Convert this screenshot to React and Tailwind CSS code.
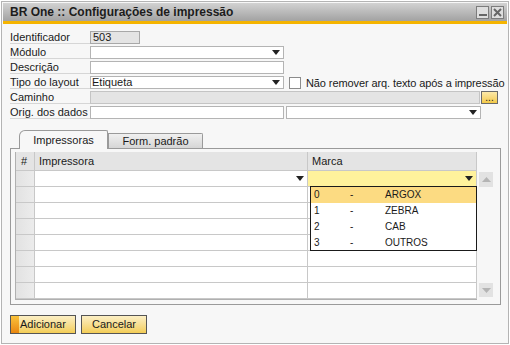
import React from 'react';

const Arrow = () => (
  <svg width="8" height="5" viewBox="0 0 8 5" className="shrink-0">
    <polygon points="0,0 8,0 4,5" fill="#222" />
  </svg>
);

function Label({ children }) {
  return (
    <div className="w-[80px] h-[13px] border-b border-[#d6d6d6] leading-[12px] shrink-0">
      {children}
    </div>
  );
}

function Select({ width, value, className = '' }) {
  return (
    <div className={`${width} h-[13px] bg-white border border-[#b4b4b4] flex items-center justify-between pl-[1px] pr-[3px] leading-[11px] shrink-0 ${className}`}>
      <span>{value}</span>
      <Arrow />
    </div>
  );
}

function App() {
  const rows = [0, 1, 2, 3, 4, 5, 6, 7];
  const options = [
    { code: '0', name: 'ARGOX' },
    { code: '1', name: 'ZEBRA' },
    { code: '2', name: 'CAB' },
    { code: '3', name: 'OUTROS' },
  ];

  return (
    <div className="w-[510px] h-[345px] bg-white p-px font-['Liberation_Sans',Arial,sans-serif] text-[11px] text-[#1a1a1a]">
      <div className="h-full border border-[#b4b4b4] bg-[#f7f7f7] p-px flex flex-col">
        {/* Title bar */}
        <div className="h-[18px] shrink-0 bg-gradient-to-b from-[#d2d2d2] to-[#a2a2a2] flex items-center justify-between pl-[7px] pr-[3px]">
          <span className="font-bold text-[12px] text-[#1c1c1c]">BR One ::  Configurações de impressão</span>
          <div className="flex gap-[2px]">
            <div className="w-[13px] h-[13px] border border-[#7c7c7c] bg-[#dedede] flex items-end justify-center pb-[2px]">
              <div className="w-[8px] h-[2px] bg-[#666]" />
            </div>
            <div className="w-[13px] h-[13px] border border-[#7c7c7c] bg-[#dedede] flex items-center justify-center">
              <svg width="9" height="9" viewBox="0 0 9 9">
                <path d="M1 1 L8 8 M8 1 L1 8" stroke="#666" strokeWidth="2" />
              </svg>
            </div>
          </div>
        </div>
        <div className="h-[3px] shrink-0 bg-[#f5b400]" />

        {/* Form */}
        <div className="pl-[7px] pt-[7px] flex flex-col gap-[2px]">
          <div className="flex items-end">
            <Label>Identificador</Label>
            <div className="w-[50px] h-[13px] bg-[#e4e4e4] border border-[#a8a8a8] pl-[2px] leading-[11px]">503</div>
          </div>
          <div className="flex items-end">
            <Label>Módulo</Label>
            <Select width="w-[194px]" value="" />
          </div>
          <div className="flex items-end">
            <Label>Descrição</Label>
            <div className="w-[194px] h-[13px] bg-white border border-[#b4b4b4]" />
          </div>
          <div className="flex items-end">
            <Label>Tipo do layout</Label>
            <Select width="w-[194px]" value="Etiqueta" />
            <div className="ml-[5px] w-[12px] h-[12px] shrink-0 bg-white border border-[#8c8c8c]" />
            <span className="ml-[5px] leading-[12px] whitespace-nowrap tracking-[-0.1px]">Não remover arq. texto após a impressão</span>
          </div>
          <div className="flex items-end">
            <Label>Caminho</Label>
            <div className="w-[390px] h-[13px] bg-[#e4e4e4] border border-[#c4c4c4]" />
            <div className="ml-[1px] w-[17px] h-[13px] bg-gradient-to-b from-[#fce9a8] to-[#f3c944] border border-[#6a6a6a] flex items-center justify-center leading-[6px] text-[10px]">
              ...
            </div>
          </div>
          <div className="flex items-end">
            <Label>Orig. dos dados</Label>
            <div className="w-[194px] h-[13px] bg-white border border-[#b4b4b4]" />
            <Select width="w-[195px]" value="" className="ml-[2px]" />
          </div>
        </div>

        {/* Tabs */}
        <div className="mt-[11px] ml-[16px] flex items-end h-[18px]">
          <div className="relative z-10 -mb-px w-[89px] h-[19px] bg-[#f7f7f7] border border-b-0 border-[#9a9a9a] rounded-tl-[6px] rounded-tr-[2px] flex items-center justify-center">
            Impressoras
          </div>
          <div className="w-[95px] h-[15px] bg-gradient-to-b from-[#f0f0f0] to-[#d6d6d6] border border-b-0 border-[#9a9a9a] rounded-tr-[2px] flex items-center justify-center">
            Form. padrão
          </div>
        </div>

        <div className="ml-[7px] w-[491px] h-[157px] border border-[#9a9a9a] pt-[3px] pl-[4px] flex">
          <div className="relative w-[462px] h-[148px] border-l border-b border-[#b0b0b0] flex flex-col">
            {/* Header */}
            <div className="flex h-[19px] bg-[#e4e4e4] border-b border-[#c8c8c8] shrink-0">
              <div className="w-[19px] border-r border-[#c8c8c8] pl-[5px] leading-[18px]">#</div>
              <div className="w-[273px] border-r border-[#c8c8c8] pl-[4px] leading-[18px]">Impressora</div>
              <div className="w-[169px] border-r border-[#c8c8c8] pl-[4px] leading-[18px]">Marca</div>
            </div>
            {rows.map((r) => (
              <div key={r} className="flex h-[16px] border-b border-[#c8c8c8] shrink-0">
                <div className="w-[19px] bg-gradient-to-r from-[#e2e2e2] to-[#ececec] border-r border-[#c8c8c8]" />
                <div className="w-[273px] bg-white border-r border-[#c8c8c8] flex items-center justify-end pr-[3px]">
                  {r === 0 && <Arrow />}
                </div>
                <div className={`w-[169px] border-r border-[#c8c8c8] flex items-center justify-end pr-[3px] ${r === 0 ? 'bg-[#fff29c]' : 'bg-white'}`}>
                  {r === 0 && <Arrow />}
                </div>
              </div>
            ))}

            {/* Dropdown list */}
            <div className="absolute left-[294px] top-[34px] w-[167px] h-[65px] bg-white border border-[#1a1a1a] text-[10px] flex flex-col">
              {options.map((o, i) => (
                <div key={o.code} className={`flex items-center h-[16px] pl-[3px] ${i === 0 ? 'bg-[#fcdb82]' : ''}`}>
                  <span className="w-[36px]">{o.code}</span>
                  <span className="w-[35px]">-</span>
                  <span>{o.name}</span>
                </div>
              ))}
            </div>
          </div>

          {/* Scrollbar */}
          <div className="w-[18px] pt-[20px] pl-[2px] pb-[3px] flex flex-col justify-between h-[148px]">
            <div className="w-[14px] h-[15px] bg-[#e2e2e2] flex items-center justify-center">
              <svg width="9" height="5" viewBox="0 0 9 5">
                <polygon points="0,5 9,5 4.5,0" fill="#b4b4b4" />
              </svg>
            </div>
            <div className="w-[14px] h-[14px] bg-[#e2e2e2] flex items-center justify-center">
              <svg width="9" height="5" viewBox="0 0 9 5">
                <polygon points="0,0 9,0 4.5,5" fill="#b4b4b4" />
              </svg>
            </div>
          </div>
        </div>

        {/* Buttons */}
        <div className="mt-[10px] ml-[7px] flex gap-[5px]">
          <div className="relative w-[66px] h-[19px] border border-[#555] bg-gradient-to-b from-[#fcefc4] to-[#f3cd55] flex items-center">
            <div className="w-[8px] h-full bg-gradient-to-b from-[#f9c23a] to-[#e8860e]" />
            <span className="ml-[1px]">Adicionar</span>
          </div>
          <div className="w-[66px] h-[19px] border border-[#555] bg-gradient-to-b from-[#fcefc4] to-[#f3cd55] flex items-center justify-center">
            Cancelar
          </div>
        </div>
      </div>
    </div>
  );
}

export default App;
